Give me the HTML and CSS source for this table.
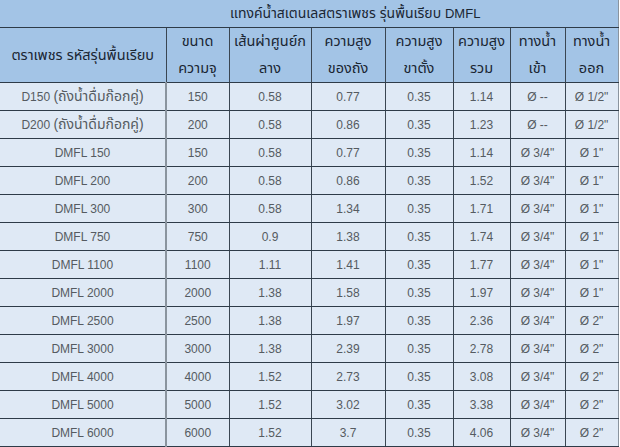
FILE: index.html
```html
<!DOCTYPE html>
<html lang="th">
<head>
<meta charset="utf-8">
<link rel="stylesheet" href="styles.css">
</head>
<body>
<table class="spec">
  <colgroup>
    <col class="c1"><col class="c2"><col class="c3"><col class="c4"><col class="c5"><col class="c6"><col class="c7"><col class="c8">
  </colgroup>
  <thead>
    <tr class="title-row">
      <th colspan="2" class="blank"></th>
      <th colspan="6" class="title">แทงค์น้ำสเตนเลสตราเพชร รุ่นพื้นเรียบ <span class="latin">DMFL</span></th>
    </tr>
    <tr class="head-row">
      <th>ตราเพชร รหัสรุ่นพื้นเรียบ</th>
      <th>ขนาด<br>ความจุ</th>
      <th>เส้นผ่าศูนย์ก<br>ลาง</th>
      <th>ความสูง<br>ของถัง</th>
      <th>ความสูง<br>ขาตั้ง</th>
      <th>ความสูง<br>รวม</th>
      <th>ทางน้ำ<br>เข้า</th>
      <th>ทางน้ำ<br>ออก</th>
    </tr>
  </thead>
  <tbody>
    <tr><td>D150 <span class="thai">(ถังน้ำดื่มก๊อกคู่)</span></td><td>150</td><td>0.58</td><td>0.77</td><td>0.35</td><td>1.14</td><td>Ø --</td><td>Ø 1/2"</td></tr>
    <tr><td>D200 <span class="thai">(ถังน้ำดื่มก๊อกคู่)</span></td><td>200</td><td>0.58</td><td>0.86</td><td>0.35</td><td>1.23</td><td>Ø --</td><td>Ø 1/2"</td></tr>
    <tr><td>DMFL 150</td><td>150</td><td>0.58</td><td>0.77</td><td>0.35</td><td>1.14</td><td>Ø 3/4"</td><td>Ø 1"</td></tr>
    <tr><td>DMFL 200</td><td>200</td><td>0.58</td><td>0.86</td><td>0.35</td><td>1.52</td><td>Ø 3/4"</td><td>Ø 1"</td></tr>
    <tr><td>DMFL 300</td><td>300</td><td>0.58</td><td>1.34</td><td>0.35</td><td>1.71</td><td>Ø 3/4"</td><td>Ø 1"</td></tr>
    <tr><td>DMFL 750</td><td>750</td><td>0.9</td><td>1.38</td><td>0.35</td><td>1.74</td><td>Ø 3/4"</td><td>Ø 1"</td></tr>
    <tr><td>DMFL 1100</td><td>1100</td><td>1.11</td><td>1.41</td><td>0.35</td><td>1.77</td><td>Ø 3/4"</td><td>Ø 1"</td></tr>
    <tr><td>DMFL 2000</td><td>2000</td><td>1.38</td><td>1.58</td><td>0.35</td><td>1.97</td><td>Ø 3/4"</td><td>Ø 1"</td></tr>
    <tr><td>DMFL 2500</td><td>2500</td><td>1.38</td><td>1.97</td><td>0.35</td><td>2.36</td><td>Ø 3/4"</td><td>Ø 2"</td></tr>
    <tr><td>DMFL 3000</td><td>3000</td><td>1.38</td><td>2.39</td><td>0.35</td><td>2.78</td><td>Ø 3/4"</td><td>Ø 2"</td></tr>
    <tr><td>DMFL 4000</td><td>4000</td><td>1.52</td><td>2.73</td><td>0.35</td><td>3.08</td><td>Ø 3/4"</td><td>Ø 2"</td></tr>
    <tr><td>DMFL 5000</td><td>5000</td><td>1.52</td><td>3.02</td><td>0.35</td><td>3.38</td><td>Ø 3/4"</td><td>Ø 2"</td></tr>
    <tr><td>DMFL 6000</td><td>6000</td><td>1.52</td><td>3.7</td><td>0.35</td><td>4.06</td><td>Ø 3/4"</td><td>Ø 2"</td></tr>
  </tbody>
</table>
</body>
</html>
```

FILE: styles.css
```css
html, body {
  margin: 0;
  padding: 0;
  background: #ffffff;
}

.spec {
  width: 618px;
  table-layout: fixed;
  border-collapse: collapse;
  font-family: "Liberation Sans", "Noto Sans Thai", "Noto Sans", sans-serif;
  font-size: 12px;
  border-right: 1px solid #8a949e;
  border-bottom: 1px solid #8a949e;
}

.c1 { width: 166px; }
.c2 { width: 63px; }
.c3 { width: 82px; }
.c4 { width: 74px; }
.c5 { width: 68px; }
.c6 { width: 57px; }
.c7 { width: 55px; }
.c8 { width: 53px; }

.spec th {
  background: #a3c4e6;
  color: #1a2633;
  font-weight: normal;
  font-size: 14.5px;
  text-align: center;
  padding: 0;
}

.title-row th {
  height: 27px;
  font-size: 14px;
  border-bottom: 1px solid #2e3b48;
}

.title-row .title {
  text-align: left;
  padding-left: 1px;
}

.title .latin {
  font-size: 13px;
}

.head-row th {
  height: 54px;
  line-height: 27px;
  border-left: 1px solid #3a4652;
  border-bottom: 1px solid #2e3b48;
}

.head-row th:first-child {
  border-left: none;
}

.spec td {
  background: #dfe9f5;
  color: #555b61;
  text-align: center;
  height: 27px;
  padding: 0;
  border-left: 1px solid #3a4652;
  border-bottom: 1px solid #2e3b48;
}

.spec td:first-child {
  border-left: none;
}

.spec td:nth-child(2) {
  border-left: 2px solid #8a949e;
}

.thai {
  font-size: 14px;
}
```
